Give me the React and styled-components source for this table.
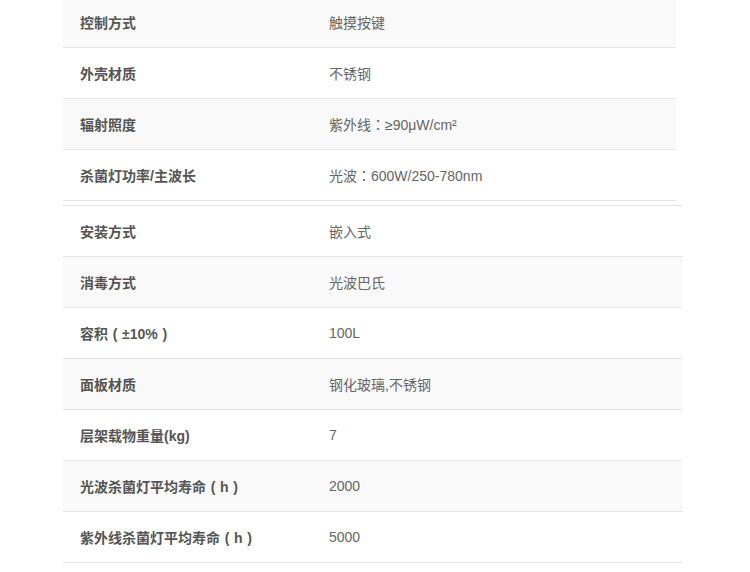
import React from "react";
import styled, { createGlobalStyle } from "styled-components";

const Global = createGlobalStyle`
  html, body { margin: 0; padding: 0; background: #fff; }
  body { font-family: "Liberation Sans", "Noto Sans CJK SC", sans-serif; }
`;

const Page = styled.div`
  padding-left: 63px;
  margin-top: -3px;
  display: flex;
  flex-direction: column;
  gap: 4px;
`;

const Table = styled.div`
  width: ${(p) => p.$width}px;
  display: flex;
  flex-direction: column;
  border-top: ${(p) => (p.$topBorder ? "1px solid #e5e5e5" : "none")};
`;

const Row = styled.div`
  display: grid;
  grid-template-columns: 249px 1fr;
  height: 50px;
  align-items: center;
  background: ${(p) => (p.$shade ? "#f9f9f9" : "#ffffff")};
  border-bottom: 1px solid #e5e5e5;
  font-size: 14px;
`;

const Label = styled.div`
  padding-left: 17px;
  font-weight: bold;
  color: #555555;
  white-space: nowrap;
`;

const Value = styled.div`
  padding-left: 17px;
  color: #666666;
  white-space: nowrap;
`;

const Colon = styled.span`
  font-family: "Noto Sans CJK TC", "Noto Sans CJK SC", sans-serif;
`;

const Paren = styled.span`
  display: inline-block;
  width: 1em;
  text-align: center;
  font-family: "Liberation Sans", sans-serif;
`;

const render = (s) =>
  s.split(/([：（）])/).map((part, i) => {
    if (part === "：") return <Colon key={i}>：</Colon>;
    if (part === "（") return <Paren key={i}>(</Paren>;
    if (part === "）") return <Paren key={i}>)</Paren>;
    return part;
  });

const first = [
  ["控制方式", "触摸按键"],
  ["外壳材质", "不锈钢"],
  ["辐射照度", "紫外线：≥90μW/cm²"],
  ["杀菌灯功率/主波长", "光波：600W/250-780nm"],
];

const second = [
  ["安装方式", "嵌入式"],
  ["消毒方式", "光波巴氏"],
  ["容积（±10%）", "100L"],
  ["面板材质", "钢化玻璃,不锈钢"],
  ["层架载物重量(kg)", "7"],
  ["光波杀菌灯平均寿命（h）", "2000"],
  ["紫外线杀菌灯平均寿命（h）", "5000"],
];

export default function App() {
  return (
    <>
      <Global />
      <Page>
        <Table $width={613}>
          {first.map(([k, v], i) => (
            <Row key={k} $shade={i % 2 === 0}>
              <Label>{render(k)}</Label>
              <Value>{render(v)}</Value>
            </Row>
          ))}
        </Table>
        <Table $width={619} $topBorder>
          {second.map(([k, v], i) => (
            <Row key={k} $shade={i % 2 === 1}>
              <Label>{render(k)}</Label>
              <Value>{render(v)}</Value>
            </Row>
          ))}
        </Table>
      </Page>
    </>
  );
}
